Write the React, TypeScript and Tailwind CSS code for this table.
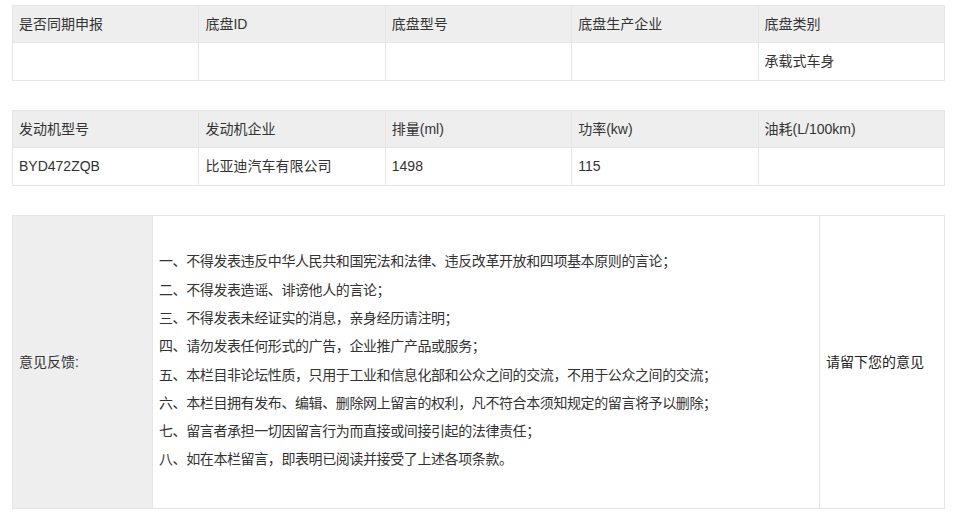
import React from 'react';

const chassisHead = ['是否同期申报', '底盘ID', '底盘型号', '底盘生产企业', '底盘类别'];
const chassisRow = ['', '', '', '', '承载式车身'];
const engineHead = ['发动机型号', '发动机企业', '排量(ml)', '功率(kw)', '油耗(L/100km)'];
const engineRow = ['BYD472ZQB', '比亚迪汽车有限公司', '1498', '115', ''];

const rules = [
  '一、不得发表违反中华人民共和国宪法和法律、违反改革开放和四项基本原则的言论；',
  '二、不得发表造谣、诽谤他人的言论；',
  '三、不得发表未经证实的消息，亲身经历请注明；',
  '四、请勿发表任何形式的广告，企业推广产品或服务；',
  '五、本栏目非论坛性质，只用于工业和信息化部和公众之间的交流，不用于公众之间的交流；',
  '六、本栏目拥有发布、编辑、删除网上留言的权利，凡不符合本须知规定的留言将予以删除；',
  '七、留言者承担一切因留言行为而直接或间接引起的法律责任；',
  '八、如在本栏留言，即表明已阅读并接受了上述各项条款。',
];

function InfoTable({ head, row }: { head: string[]; row: string[] }) {
  return (
    <table className="w-[933px] table-fixed border-collapse">
      <tbody>
        <tr className="h-[37px] bg-[#eeeeee]">
          {head.map((h, i) => (
            <td key={i} className="border border-[#e6e6e6] px-[6px] align-middle">{h}</td>
          ))}
        </tr>
        <tr className="h-[38px] bg-white">
          {row.map((c, i) => (
            <td key={i} className="border border-[#e6e6e6] px-[6px] align-middle">{c}</td>
          ))}
        </tr>
      </tbody>
    </table>
  );
}

export default function App() {
  return (
    <div
      className="min-h-screen bg-white pl-3 pt-[5px] text-[14px] text-[#333333]"
      style={{ fontFamily: '"Liberation Sans", "Noto Sans CJK SC", sans-serif' }}
    >
      <div className="flex flex-col gap-[29px]">
        <InfoTable head={chassisHead} row={chassisRow} />
        <InfoTable head={engineHead} row={engineRow} />

        <table className="w-[933px] table-fixed border-collapse">
          <tbody>
            <tr className="h-[293px]">
              <td className="w-[140px] border border-[#e6e6e6] bg-[#eeeeee] px-[6px] align-middle">意见反馈:</td>
              <td className="border border-[#e6e6e6] px-[6px] pb-[3px] align-middle">
                <div className="flex flex-col leading-[28.3px] tracking-[-0.4px]">
                  {rules.map((r, i) => (
                    <p key={i}>{r}</p>
                  ))}
                </div>
              </td>
              <td className="w-[125px] border border-[#e6e6e6] px-[6px] align-middle text-[#222222]">请留下您的意见</td>
            </tr>
          </tbody>
        </table>
      </div>
    </div>
  );
}
